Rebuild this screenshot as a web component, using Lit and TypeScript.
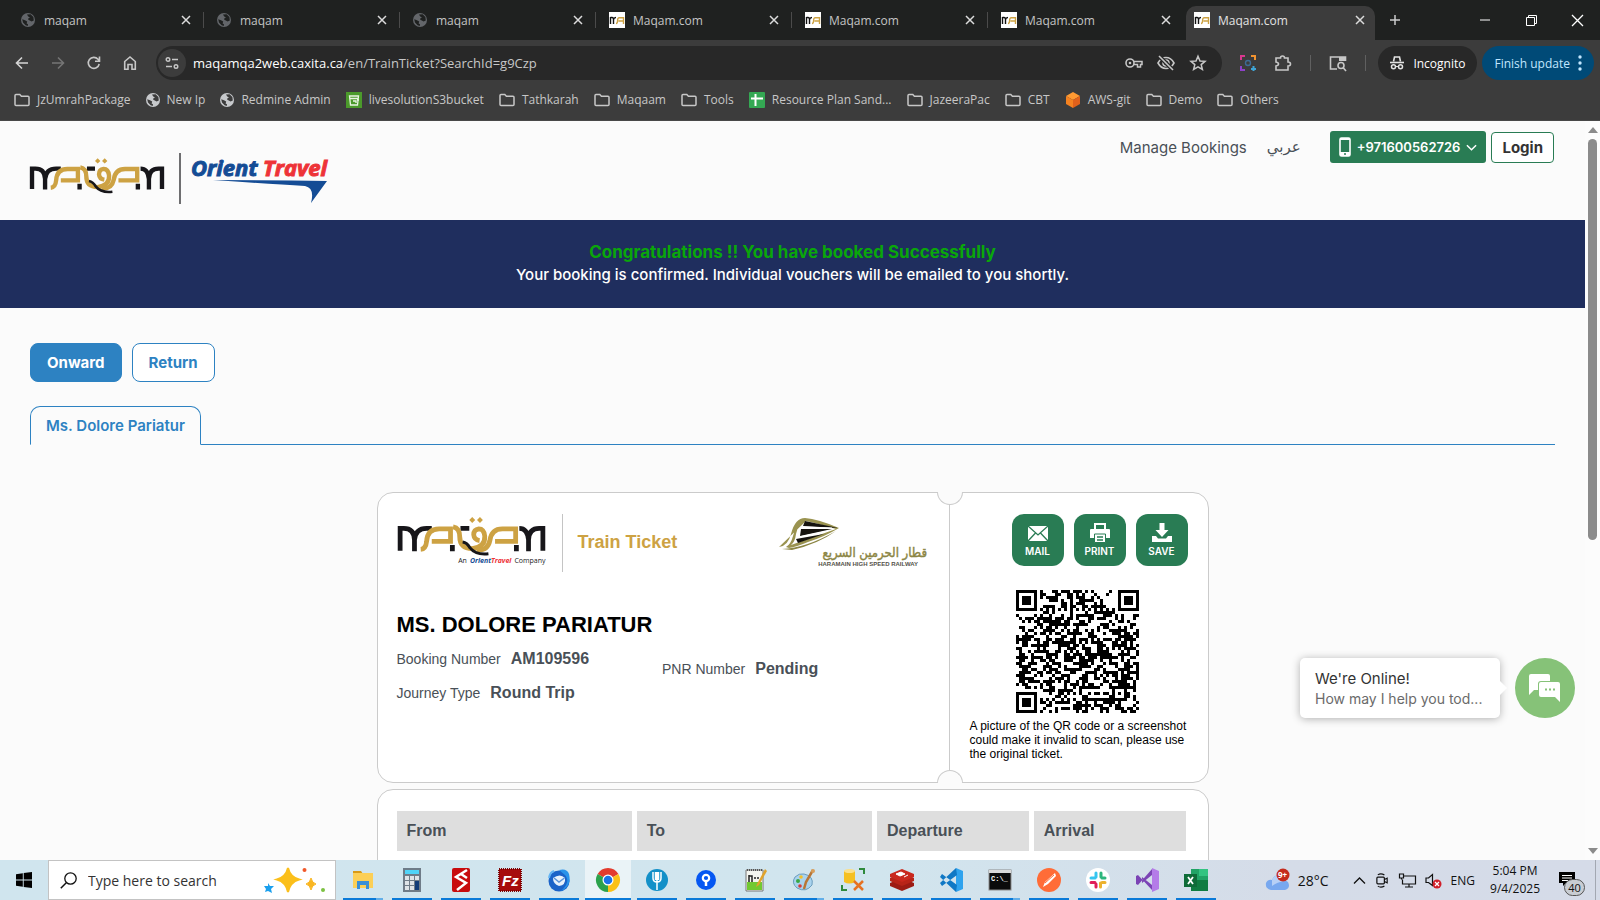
import { LitElement, html, svg, css } from "lit";
import { customElement } from "lit/decorators.js";

const icon = (size: number, box: string, body: unknown, h = size) =>
  html`<svg width=${size} height=${h} viewBox=${box} fill="none" aria-hidden="true">${body}</svg>`;

const globe = (color: string, land: string) => icon(14, "0 0 14 14", svg`
  <circle cx="7" cy="7" r="7" fill=${color}/>
  <path d="M1.2 6.2 4 7.2 6.2 8.6 5.6 10.4 7 11.2 6.8 13 4.6 12.2 2 9.6Z M6 1.4 9.6 1.2 12.4 4 12.8 7.4 10.6 8.6 8.8 7.4 7.2 6.8 7.4 5.2 9 4.4 7.2 3.6Z" fill=${land}/>`);

const maqamFavicon = () => icon(16, "0 0 16 16", svg`
  <rect width="16" height="16" fill="#fff"/>
  <path d="M1.5 5V12M1.5 5.500H3Q4.500 5.500 4.500 7.500V12M4.500 7.500Q5 5.500 7 5.500" stroke="#111" stroke-width="1.400"/>
  <path d="M7 11.5Q8.6 11.5 8.6 8.500T10.500 5.700H14.500V12M9.500 9H14.500" stroke="#cda243" stroke-width="1.400"/>`);

const folder = () => icon(16, "0 0 16 16", svg`
  <path d="M1 3.500Q1 2.500 2 2.500H5.800L7.400 4.200H14Q15 4.200 15 5.200V12.500Q15 13.500 14 13.500H2Q1 13.500 1 12.500Z" stroke="#c7c7c7" stroke-width="1.500"/>`);

const close = (s = 10, c = "#dcdcdc") => icon(s, "0 0 10 10", svg`<path d="M1 1 9 9M9 1 1 9" stroke=${c} stroke-width="1.500"/>`);

const maqamMark = (width: number) => icon(width, "0 0 400 106", svg`
  <g stroke="#17161a" stroke-width="13">
    <path d="M6 92V31H16Q44 31 45 62V93M45 62Q48 31 78 31H92"/>
    <path d="M394 92V31H384Q356 31 355 62V93M355 62Q352 31 330 31"/>
    <path d="M148 76V93M170 31H194M322 76V93"/>
  </g>
  <g stroke="#cda243" stroke-width="13">
    <path d="M62 88Q76 87 78 66Q80 32 112 32H143V66H92"/>
    <path d="M150 27Q168 30 168 54Q168 86 202 86Q238 82 236 52Q234 32 220 32Q206 34 206 48Q207 62 222 64"/>
    <path d="M214 90Q244 92 250 64Q254 32 284 32H320V66H264"/>
  </g>
  <path d="M176 68Q188 70 196 84Q212 104 246 100" stroke="#17161a" stroke-width="8"/>
  <path d="M202 0 210 8 202 16 194 8ZM223 0 231 8 223 16 215 8Z" fill="#cda243"/>`, Math.round(width * 0.265));

const orientLogo = () => html`<svg class="orient" width="138" height="52" viewBox="0 0 138 52" role="img" aria-label="Orient Travel">
  <text x="0" y="23" fill="#144c95" stroke="#144c95">Orient</text>
  <text x="72" y="23" fill="#ee3338" stroke="#ee3338">Travel</text>
  <path d="M22 27Q80 27 136 28L120 50Q124 35 114 33Q80 31 22 27Z" fill="#144c95"/></svg>`;

const railLogo = () => html`<svg class="rail" width="150" height="54" viewBox="0 0 150 54" role="img" aria-label="Haramain High Speed Railway">
  <path d="M1 33Q10 32 13 20Q17 4 27 4Q40 5 61 14Q46 23 30 28Q18 33 11 34L8 33Q13 30 15 22Q18 9 26 7Q20 10 18 20Q17 28 13 31L58 15Q38 9 28 7" fill="#9a9350"/>
  <path d="M27 7 60 14 25 12ZM23 15 54 15 22 22ZM18 25 46 20 20 29Z" fill="#15130f"/>
  <path d="M24 13 54 14M21 23 50 17" stroke="#fff" stroke-width="1"/>
  <path d="M4 35Q28 34 58 17Q40 30 14 36Z" fill="#8b8543"/>
  <text class="rail-ar" x="149" y="43" fill="#8b8543">قطار الحرمين السريع</text>
  <text class="rail-en" x="140" y="52" fill="#55524a">HARAMAIN HIGH SPEED RAILWAY</text></svg>`;

const N = 41;
function qrPath(): string {
  let seed = 7321;
  const rnd = () => ((seed = (seed * 1103515245 + 12345) % 2147483648) / 2147483648);
  let d = "";
  const finder = (x: number, y: number, ox: number, oy: number) => {
    const a = x - ox, b = y - oy;
    if (a < -1 || b < -1 || a > 7 || b > 7) return null;
    if (a < 0 || b < 0 || a > 6 || b > 6) return false;
    const r = Math.max(Math.abs(a - 3), Math.abs(b - 3));
    return r !== 2;
  };
  for (let y = 0; y < N; y++) {
    for (let x = 0; x < N; x++) {
      const random = rnd() < 0.51;
      let on = finder(x, y, 0, 0) ?? finder(x, y, N - 7, 0) ?? finder(x, y, 0, N - 7);
      if (on === null) {
        const r = Math.max(Math.abs(x - 34), Math.abs(y - 34));
        if (r <= 2) on = r !== 1;
        else if (x === 6 || y === 6) on = (x + y) % 2 === 0;
        else on = random;
      }
      if (on) d += `M${x} ${y}h1v1h-1z`;
    }
  }
  return d;
}

const taskIcons: { name: string; state?: string; art: unknown }[] = [
  { name: "File Explorer", state: "multi", art: svg`<path d="M2 3H10L12 6H2Z" fill="#d99a17"/><path d="M2 5H22V20H2Z" fill="#fccf56"/><path d="M6 21V13H18V21H15V17H9V21Z" fill="#3a8fd6"/>` },
  { name: "Calculator", art: svg`<rect x="3" width="18" height="24" fill="#6f7c88"/><rect x="5" y="2" width="14" height="4" fill="#50d4f8"/><path d="M5 8h4v4H5zM10 8h4v4h-4zM15 8h4v4h-4zM5 13h4v4H5zM10 13h4v4h-4zM5 18h4v4H5zM10 18h4v4h-4z" fill="#dfe4e8"/><rect x="15" y="13" width="4" height="9" fill="#123c78"/>` },
  { name: "Red script tool", art: svg`<rect x="3" width="18" height="24" rx="2" fill="#c80b0d"/><path d="M18 2 7 9 17 15 8 22M12 6 18 10" stroke="#fff" stroke-width="2.500"/>` },
  { name: "FileZilla", art: svg`<rect x="1" y="1" width="22" height="22" fill="#a70c0c" stroke="#7d0505" stroke-width="2" stroke-dasharray="1 1"/><text class="glyph-fz" x="4" y="18" fill="#fff">Fz</text>` },
  { name: "Thunderbird", art: svg`<circle cx="12" cy="13" r="10.500" fill="#1b63c8"/><path d="M12 2Q20 0 22 6Q25 18 14 23Q24 14 18 7Z" fill="#2993ea"/><path d="M6 10Q13 5 18 10Q19 17 12 18Q6 16 6 10Z" fill="#e8f1fb"/><path d="M7 10 12 14 17.500 10" stroke="#5b93d8" stroke-width="1.500"/><path d="M2 10Q3 4 7 3" stroke="#64b5f4" stroke-width="2"/>` },
  { name: "Chrome", state: "active", art: svg`<path d="M12 12 1.600 6A12 12 0 0 1 22.400 6Z" fill="#e33b2e"/><path d="M12 12 22.400 6A12 12 0 0 1 12 24Z" fill="#fbc116"/><path d="M12 12V24A12 12 0 0 1 1.600 6Z" fill="#2ba24c"/><circle cx="12" cy="12" r="5.500" fill="#fff"/><circle cx="12" cy="12" r="4.300" fill="#1a73e8"/>` },
  { name: "Fork", art: svg`<circle cx="12" cy="12" r="11" fill="#1390c8"/><path d="M8 4V10Q8 14 12 14Q16 14 16 10V4M12 4V22M10.500 4V12M13.500 4V12" stroke="#fff" stroke-width="1.500"/>` },
  { name: "Sourcetree", art: svg`<circle cx="12" cy="12" r="10" fill="#0557f2"/><circle cx="12" cy="10" r="3.200" stroke="#fff" stroke-width="2.200"/><path d="M12 14V18" stroke="#fff" stroke-width="2.500"/>` },
  { name: "Notepad++", art: svg`<path d="M3 2H20V23H3Z" fill="#f4f5ef" stroke="#777"/><path d="M4 14H19V22H4Z" fill="#72c932"/><path d="M4 2H19" stroke="#555" stroke-width="2" stroke-dasharray="1 1"/><path d="M6 7V14M6 8H9V14M11 10H13M14 10H16" stroke="#222" stroke-width="1.500"/><path d="M22 1 14 16 13 19 16 17 24 3Z" fill="#e0a32c"/>` },
  { name: "Paint", state: "multi", art: svg`<path d="M12 6Q22 8 20 17Q14 25 5 20Q-1 15 3 9Q7 5 12 6Z" fill="#a9d3ee" stroke="#6b9dbd"/><circle cx="6" cy="13" r="2" fill="#39a845"/><circle cx="9" cy="9" r="1.800" fill="#f3c029"/><circle cx="8" cy="18" r="1.800" fill="#d93a3a"/><path d="M21 2 14 14 12 21" stroke="#b87636" stroke-width="2.500"/><circle cx="21" cy="3" r="2" fill="#d79e5a"/>` },
  { name: "Database tools", art: svg`<path d="M3 3Q9 0 14 3V14Q8 17 3 14Z" fill="#f5c021"/><ellipse cx="8.500" cy="3" rx="5.500" ry="2" fill="#fbe08a"/><path d="M18 1H23V6M6 22H1V17" stroke="#2f8a3c" stroke-width="2"/><path d="M13 13 22 22M22 13 13 22" stroke="#e67222" stroke-width="2.500"/>` },
  { name: "Redis", art: svg`<path d="M0 15 12 10 24 15V18L12 23 0 18Z" fill="#9c1c14"/><path d="M0 10 12 5 24 10V13L12 18 0 13Z" fill="#b82418"/><path d="M0 6 12 1 24 6V9L12 14 0 9Z" fill="#c9281d"/><path d="M6 6 11 4 15 6 10 8ZM14 9 18 7" fill="#fff" stroke="#fff"/>` },
  { name: "Visual Studio Code", art: svg`<path d="M17 0 24 3V21L17 24Z" fill="#2fa3ee"/><path d="M17 0 1 15 3 18 18 7ZM17 24 1 9 3 6 18 17Z" fill="#0f78c5"/>` },
  { name: "Command Prompt", state: "multi", art: svg`<rect x="1" y="2" width="22" height="20" fill="#0b0b0b" stroke="#8b8b8b"/><rect x="1" y="2" width="22" height="3" fill="#d9d9d9"/><text class="glyph-cmd" x="3" y="13" fill="#fff">C:\\_</text>` },
  { name: "Postman", art: svg`<circle cx="12" cy="12" r="12" fill="#ff6c37"/><path d="M18 5 8 14 6 19 11 16 19 8Z" fill="#fff"/><path d="M8 15 17 7" stroke="#ff6c37"/>` },
  { name: "Slack", art: svg`<circle cx="12" cy="12" r="12" fill="#fff"/><g stroke-width="3" stroke-linecap="round"><path d="M10 5V9M5 10H9" stroke="#36c5f0"/><path d="M15 5V9M19 10H16" stroke="#2eb67d"/><path d="M14.500 15V19M16 14.500H19" stroke="#ecb22e"/><path d="M10 16V19M5 14.500H9" stroke="#e01e5a"/></g>` },
  { name: "Visual Studio", art: svg`<path d="M17 0 24 3V21L17 24Z" fill="#b47be8"/><path d="M17 1 3 17 1 16V8L3 7 17 22V17L7 9V15L17 7Z" fill="#7b43b5"/>` },
  { name: "Excel", art: svg`<rect x="7" y="1" width="17" height="22" fill="#21a366"/><path d="M15 1H24V8H15Z" fill="#33c481"/><path d="M7 12H24V23H7Z" fill="#107c41"/><rect y="6" width="13" height="13" fill="#0e6b38"/><path d="M4 9 9 16M9 9 4 16" stroke="#fff" stroke-width="1.800"/>` },
];

@customElement("app-root")
export class AppRoot extends LitElement {
  static styles = css`
    :host { display: flex; flex-direction: column; height: 100vh; overflow: hidden; font-family: "Open Sans", sans-serif; --green: #297c54; --blue: #2d82c2; --sheet: #fbfbfb; }
    *, *::before, *::after { box-sizing: border-box; }
    button { font: inherit; color: inherit; background: none; border: 0; padding: 0; display: inline-flex; align-items: center; justify-content: center; }
    a { color: inherit; text-decoration: none; }
    h1, h2, p { margin: 0; padding: 0; }
    svg { display: block; flex: none; overflow: visible; }

    .strip { display: flex; height: 40px; flex: none; background: #1f2120; color: #c4c4c4; font-size: 12px; padding-left: 8px; }
    .tab { flex: 0 1 196px; height: 40px; display: flex; align-items: center; padding: 0 13px; position: relative; }
    .tab span { flex: 1; padding-left: 8px; }
    .tab.plain span { padding-left: 9px; }
    .tab::after { content: ""; position: absolute; right: 0; top: 12px; width: 1px; height: 16px; background: #4b4b4b; }
    .tab.before::after { display: none; }
    .tab.current { flex-basis: 189px; margin-left: 2px; height: 34px; align-self: flex-end; background: #3c3c3c; border-radius: 10px 10px 0 0; padding: 0 10px 6px 8px; color: #e3e3e3; }
    .tab.current::after { display: none; }
    .plus { width: 40px; }
    .window { margin-left: auto; display: flex; }
    .window button { width: 46px; }

    .toolbar { flex: none; background: #3c3c3c; display: flex; align-items: center; height: 46px; padding: 0 6px 0 14px; }
    .nav { display: flex; gap: 20px; margin-right: 18px; }
    .nav button { width: 16px; }
    .omni { flex: 1; display: flex; align-items: center; height: 34px; border-radius: 17px; background: #282828; padding: 0 15px 0 2px; color: #c7c7c7; font-size: 13px; }
    .site { width: 28px; height: 28px; border-radius: 14px; background: #3c3c3c; margin-right: 7px; }
    .omni b { font-weight: 400; color: #fff; }
    .url { flex: 1; }
    .omni .tools { display: flex; gap: 14px; }
    .ext { display: flex; align-items: center; gap: 18px; margin: 0 12px 0 18px; }
    .ext i { width: 1px; height: 16px; background: #606060; }
    .chip { height: 34px; border-radius: 17px; background: #282828; color: #fff; font-size: 12px; padding: 0 12px; gap: 9px; margin-right: 5px; }
    .chip.update { background: #004a77; color: #c2e7ff; padding: 0 12px; gap: 8px; margin: 0; white-space: nowrap; }

    .marks { flex: none; height: 35px; background: #3c3c3c; border-bottom: 1px solid #484848; display: flex; align-items: center; gap: 15px; padding: 0 14px 7px; color: #c7c7c7; font-size: 12px; white-space: nowrap; }
    .marks a { display: flex; align-items: center; gap: 7px; }

    .view { flex: 1; min-height: 0; display: flex; background: var(--sheet); position: relative; }
    .page { flex: 1; min-width: 0; overflow: hidden; font-family: Inter, sans-serif; color: #495057; }
    .scroll { width: 15px; background: #fcfcfc; display: flex; flex-direction: column; align-items: center; padding: 6px 0; gap: 6px; }
    .thumb { width: 9px; height: 401px; border-radius: 5px; background: #8b8b8b; }
    .down { margin-top: auto; }

    header { display: flex; height: 99px; padding: 10px 31px 0 30px; }
    .brand { display: flex; align-items: flex-start; padding-top: 22px; }
    .brand .mark { padding-top: 5px; }
    .rule { width: 2px; height: 51px; background: #6e6e70; margin: 0 10px 0 15px; }
    .orient text { font: italic 700 22px "Open Sans", sans-serif; stroke-width: 1px; }
    .menu { margin-left: auto; display: flex; align-items: center; height: 32px; font-size: 15px; }
    .menu .ar { font-family: "DejaVu Sans", sans-serif; margin: 0 29px 0 20px; }
    .phone { height: 32px; border-radius: 3px; background: var(--green); color: #fff; font-size: 13px; font-weight: 600; padding: 0 9px; gap: 6px; margin-right: 5px; }
    .login { height: 31px; border: 1px solid var(--green); border-radius: 4px; background: #fff; color: #333; font-weight: 700; font-size: 15px; padding: 0 10px; }

    .banner { background: #1f2e5e; color: #fff; text-align: center; height: 88px; padding-top: 21px; font-size: 15px; line-height: 22px; font-weight: 500; }
    .banner h1 { font-size: 17px; line-height: 23px; font-weight: 700; color: #0aa70a; }

    .content { padding: 35px 30px 0; }
    .ways { display: flex; gap: 10px; }
    .ways button { height: 39px; border: 1px solid var(--blue); border-radius: 8px; background: #fff; color: var(--blue); font-weight: 700; font-size: 15px; padding: 0 16px 1px; }
    .ways .on { background: var(--blue); color: #fff; }
    .names { margin-top: 24px; border-bottom: 1px solid var(--blue); height: 39px; display: flex; }
    .names button { height: 39px; border: 1px solid var(--blue); border-bottom-color: var(--sheet); border-radius: 10px 10px 0 0; background: var(--sheet); color: var(--blue); font-weight: 600; font-size: 15px; padding: 0 15px 1px; }

    .card { max-width: 832px; margin: 0 auto; background: #fff; border: 1px solid #cbcbcb; border-radius: 16px; font-family: "Liberation Sans", sans-serif; }
    .ticket { margin-top: 47px; display: flex; height: 291px; position: relative; }
    .main { flex: 1; padding: 21px 21px 0 19px; }
    .stub { width: 259px; border-left: 1px solid #cbcbcb; padding: 21px 20px 0; position: relative; }
    .notch { position: absolute; width: 26px; height: 13px; left: -13px; background: var(--sheet); border: 1px solid #cbcbcb; }
    .notch.top { top: -1px; border-top: 0; border-radius: 0 0 13px 13px; }
    .notch.bottom { bottom: -1px; border-bottom: 0; border-radius: 13px 13px 0 0; }
    .head { display: flex; height: 58px; }
    .head .logo { padding-top: 3px; }
    .head .sub { display: flex; justify-content: flex-end; align-items: center; gap: 3px; font: 7px "Open Sans", sans-serif; color: #222; }
    .sub b { font-style: italic; color: #144c95; }
    .sub b + b { color: #ee3338; margin-left: -3px; }
    .title { border-left: 1px solid #c4c4c4; margin-left: 16px; padding-left: 15px; color: #cda243; font-weight: 700; font-size: 18px; line-height: 56px; }
    .rail { margin-left: auto; }
    .rail-ar { font: 400 13px "DejaVu Sans Condensed", "DejaVu Sans", sans-serif; direction: rtl; text-anchor: start; stroke: #8b8543; stroke-width: 0.4px; }
    .rail-en { font: 700 6px "Liberation Sans", sans-serif; text-anchor: end; }
    .who { color: #000; font-size: 22px; line-height: 26px; margin-top: 40px; }
    .facts { display: grid; grid-template-columns: 1fr 1fr; align-items: start; margin-top: 4px; }
    .fact { font-size: 14px; line-height: 34px; }
    .late { padding-top: 10px; }
    .fact b { font-size: 16px; margin-left: 10px; }
    .acts { display: flex; gap: 10px; justify-content: flex-end; }
    .acts button { width: 52px; height: 52px; border-radius: 12px; background: var(--green); color: #fff; flex-direction: column; gap: 2px; font: 600 10px/12px Inter, sans-serif; }
    .qr { margin: 24px 0 0 46px; }
    .note { color: #000; font-size: 12px; line-height: 14px; margin-top: 6px; white-space: nowrap; }

    .trip { margin-top: 6px; padding: 21px 17px 0 14px; height: 200px; }
    table { width: 100%; border-spacing: 5px 0; table-layout: fixed; }
    th { background: #dedede; text-align: left; font-size: 16px; height: 40px; padding: 0 10px; }
    .place { width: 30.4%; }

    .chat { position: absolute; right: 25px; bottom: 142px; display: flex; gap: 15px; font-family: Inter, sans-serif; }
    .bubble { width: 200px; height: 60px; border-radius: 5px; background: #fff; box-shadow: 0 1px 8px rgba(0, 0, 0, .3); padding: 11px 15px; font-size: 15px; line-height: 20px; color: #333; position: relative; }
    .bubble::after { content: ""; position: absolute; right: -5px; top: 25px; width: 10px; height: 10px; background: #fff; transform: rotate(45deg); }
    .bubble p { font-size: 14px; color: #6a6a6a; overflow: hidden; text-overflow: ellipsis; white-space: nowrap; }
    .talk { width: 60px; height: 60px; border-radius: 30px; background: #86c278; }

    .task { flex: none; height: 40px; display: flex; background: linear-gradient(90deg, #d0e5ee, #d1e5ee 55%, #d5dce8 80%, #d5dbe8); color: #111; font-size: 12px; }
    .start { width: 48px; }
    .search { width: 288px; height: 40px; background: #fff; border: 1px solid #c3c3c3; display: flex; align-items: center; gap: 11px; padding: 0 9px 0 11px; }
    .search input { flex: 1; min-width: 0; border: 0; outline: 0; font: 14px "Open Sans", sans-serif; padding: 0; background: none; }
    .search input::placeholder { color: #333; opacity: 1; }
    .apps { display: flex; gap: 9px; padding-left: 7px; }
    .apps button { width: 40px; height: 40px; border-bottom: 2px solid #0a7ad8; padding-top: 1px; }
    .apps .multi { border-image: linear-gradient(90deg, #0a7ad8 80%, #62aee8 80%) 1; }
    .apps .active { background: #eaf3f7; width: 46px; margin: 0 -3px; }
    .tray { margin-left: auto; display: flex; align-items: center; }
    .tray .temp { font-size: 14px; margin: 0 24px 0 7px; }
    .sys { display: flex; align-items: center; gap: 9px; }
    .clock { text-align: center; line-height: 18px; margin: 0 19px 0 15px; }
    .alert { position: relative; width: 37px; height: 40px; border-right: 1px solid #a3a8b2; margin-right: 4px; align-items: flex-start; justify-content: flex-start; padding-top: 12px; }
    .count { position: absolute; left: 5px; top: 19px; width: 21px; height: 17px; border: 1px solid #555; border-radius: 9px; background: #c9cdd3; font-size: 11px; line-height: 15px; text-align: center; }
    .glyph-fz { font: italic 700 15px "Liberation Sans", sans-serif; }
    .glyph-cmd { font: 700 7px "Liberation Mono", monospace; }
    .nine { font: 700 8px "Open Sans", sans-serif; }
  `;

  private tabs() {
    const titles = ["maqam", "maqam", "maqam", "Maqam.com", "Maqam.com", "Maqam.com", "Maqam.com"];
    return titles.map((t, i) => html`<div class="tab ${i < 3 ? "plain" : ""} ${i === 6 ? "current" : ""} ${i === 5 ? "before" : ""}">
      ${i < 3 ? globe("#63666a", "#1f2120") : maqamFavicon()}<span>${t}</span><button aria-label="Close tab">${close()}</button></div>`);
  }

  private bookmarks() {
    const s3 = icon(16, "0 0 16 16", svg`<rect width="16" height="16" fill="#4b9a2b"/><path d="M3.500 4H12.500L11.500 13H4.500ZM4 6.500H12M7 9H10V11M11 8H13" stroke="#e9f4e2" stroke-width="1.300"/>`);
    const sheet = icon(16, "0 0 16 16", svg`<rect width="16" height="16" rx="1" fill="#34a853"/><path d="M6.500 2V14M2 6.500H14" stroke="#fff" stroke-width="2"/>`);
    const cube = icon(16, "0 0 16 16", svg`<path d="M8 0 15 4 8 8 1 4Z" fill="#ff9a32"/><path d="M1 4 8 8V16L1 12Z" fill="#f58220"/><path d="M15 4 8 8V16L15 12Z" fill="#e1611b"/>`);
    const g = () => globe("#c7c9cc", "#3c3c3c");
    const items: [unknown, string][] = [[folder(), "JzUmrahPackage"], [g(), "New Ip"], [g(), "Redmine Admin"], [s3, "livesolutionS3bucket"], [folder(), "Tathkarah"], [folder(), "Maqaam"], [folder(), "Tools"], [sheet, "Resource Plan Sand..."], [folder(), "JazeeraPac"], [folder(), "CBT"], [cube, "AWS-git"], [folder(), "Demo"], [folder(), "Others"]];
    return items.map(([i, t]) => html`<a href="#">${i}${t}</a>`);
  }

  render() {
    const c = "#c7c7c7";
    return html`
      <div class="strip">
        ${this.tabs()}
        <button class="plus" aria-label="New tab">${icon(12, "0 0 12 12", svg`<path d="M6 1V11M1 6H11" stroke="#ccc" stroke-width="1.500"/>`)}</button>
        <div class="window">
          <button aria-label="Minimize">${icon(10, "0 0 10 10", svg`<path d="M0 5H10" stroke="#fff"/>`)}</button>
          <button aria-label="Restore">${icon(11, "0 0 11 11", svg`<path d="M.5 2.500H8.500V10.500H.5ZM2.500 2.500V.5H10.500V8.500H8.500" stroke="#fff"/>`)}</button>
          <button aria-label="Close">${icon(11, "0 0 10 10", svg`<path d="M0 0 10 10M10 0 0 10" stroke="#fff" stroke-width="1.200"/>`)}</button>
        </div>
      </div>
      <div class="toolbar">
        <div class="nav">
          <button aria-label="Back">${icon(16, "0 0 16 16", svg`<path d="M14 8H3M8 2.500 2.500 8 8 13.500" stroke="#d5d5d5" stroke-width="1.600"/>`)}</button>
          <button aria-label="Forward">${icon(16, "0 0 16 16", svg`<path d="M2 8H13M8 2.500 13.500 8 8 13.500" stroke="#757575" stroke-width="1.600"/>`)}</button>
          <button aria-label="Reload">${icon(16, "0 0 16 16", svg`<path d="M13.200 9A5.500 5.500 0 1 1 12 4.300L13.500 6M13.500 1.500V6.300H9" stroke=${c} stroke-width="1.600"/>`)}</button>
          <button aria-label="Home">${icon(16, "0 0 16 16", svg`<path d="M2.700 14.200V6.500L8 2 13.300 6.500V14.200H10V9.500H6V14.200Z" stroke=${c} stroke-width="1.600"/>`)}</button>
        </div>
        <div class="omni">
          <button class="site" aria-label="Site information">${icon(14, "0 0 14 14", svg`<path d="M7 3.500H13M1 10.500H7" stroke=${c} stroke-width="1.500"/><circle cx="3" cy="3.500" r="1.800" stroke=${c} stroke-width="1.400"/><circle cx="11" cy="10.500" r="1.800" stroke=${c} stroke-width="1.400"/>`)}</button>
          <div class="url"><b>maqamqa2web.caxita.ca</b>/en/TrainTicket?SearchId=g9Czp</div>
          <div class="tools">
            ${icon(18, "0 0 18 18", svg`<circle cx="5" cy="9" r="4" stroke=${c} stroke-width="1.600"/><circle cx="5" cy="9" r="1.300" fill=${c}/><path d="M9 7.500H17V10.500H15.500V13H12.500V10.500H9" stroke=${c} stroke-width="1.500"/>`)}
            ${icon(18, "0 0 18 18", svg`<path d="M1 9Q4 3.500 9 3.500T17 9Q14 14.500 9 14.500T1 9Z" stroke=${c} stroke-width="1.600"/><circle cx="9" cy="9" r="3" stroke=${c} stroke-width="1.600"/><path d="M2 2 16 16" stroke="#282828" stroke-width="4"/><path d="M2 2 16 16" stroke=${c} stroke-width="1.600"/>`)}
            ${icon(18, "0 0 18 18", svg`<path d="M9 2.200 11 7 16 7.300 12.200 10.600 13.400 15.500 9 12.800 4.600 15.500 5.800 10.600 2 7.300 7 7Z" stroke=${c} stroke-width="1.500"/>`)}
          </div>
        </div>
        <div class="ext">
          ${icon(16, "0 0 16 16", svg`<g stroke-width="2"><path d="M1 5V1H5" stroke="#d8388e"/><path d="M11 1H15V5" stroke="#f29330"/><path d="M1 11V15H5" stroke="#8e41c9"/><path d="M11 14H16M13.500 11V16" stroke="#3ea6d8"/></g><circle cx="8" cy="8" r="2.500" stroke="#3d6b94" stroke-width="1.400"/>`)}
          ${icon(18, "0 0 18 18", svg`<path d="M2 4H6.500Q6.500 2 8.500 2T10.500 4H14V8Q16.500 8 16.500 10T14 12V16H2V12Q4.500 11.500 4.500 10T2 8Z" stroke=${c} stroke-width="1.600"/>`)}
          <i></i>
          ${icon(18, "0 0 18 18", svg`<path d="M8 15H1.500V3H16.500V7" stroke=${c} stroke-width="1.600"/><path d="M10 3H17V7H10Z" fill=${c}/><circle cx="12" cy="11.500" r="3" stroke=${c} stroke-width="1.600"/><path d="M14 13.500 17 17" stroke=${c} stroke-width="1.600"/>`)}
          <i></i>
        </div>
        <button class="chip">${icon(14, "0 0 14 14", svg`<path d="M3.500 5.500 4.500 1H9.500L10.500 5.500" stroke="#e3e3e3" stroke-width="1.600"/><path d="M0 6.500H14" stroke="#e3e3e3" stroke-width="1.600"/><circle cx="3.500" cy="10.800" r="2" stroke="#e3e3e3" stroke-width="1.500"/><circle cx="10.500" cy="10.800" r="2" stroke="#e3e3e3" stroke-width="1.500"/><path d="M5.500 10.500H8.500" stroke="#e3e3e3"/>`)}Incognito</button>
        <button class="chip update">Finish update ${icon(4, "0 0 4 16", svg`<g fill="#c2e7ff"><circle cx="2" cy="2" r="1.700"/><circle cx="2" cy="8" r="1.700"/><circle cx="2" cy="14" r="1.700"/></g>`, 16)}</button>
      </div>
      <nav class="marks">${this.bookmarks()}</nav>

      <div class="view">
        <div class="page">
          <header>
            <div class="brand"><span class="mark">${maqamMark(134)}</span><span class="rule"></span>${orientLogo()}</div>
            <div class="menu">
              <a href="#">Manage Bookings</a><a class="ar" href="#">عربي</a>
              <button class="phone">${icon(12, "0 0 12 20", svg`<rect x="1" y="1" width="10" height="18" rx="1.500" stroke="#fff" stroke-width="1.600"/><path d="M1 15H11V19H1ZM1 1H11V3H1Z" fill="#fff"/><circle cx="6" cy="17" r="1" fill="#297c54"/>`, 20)}+971600562726 ${icon(11, "0 0 12 12", svg`<path d="M1 3.500 6 8.500 11 3.500" stroke="#fff" stroke-width="1.600"/>`)}</button>
              <button class="login">Login</button>
            </div>
          </header>
          <section class="banner"><h1>Congratulations !! You have booked Successfully</h1><p>Your booking is confirmed. Individual vouchers will be emailed to you shortly.</p></section>
          <div class="content">
            <div class="ways"><button class="on">Onward</button><button>Return</button></div>
            <div class="names"><button>Ms. Dolore Pariatur</button></div>
            <section class="card ticket">
              <div class="main">
                <div class="head">
                  <div class="logo">${maqamMark(149)}<div class="sub">An <b>Orient</b><b>Travel</b> Company</div></div>
                  <div class="title">Train Ticket</div>
                  ${railLogo()}
                </div>
                <h2 class="who">MS. DOLORE PARIATUR</h2>
                <div class="facts">
                  <div><div class="fact">Booking Number<b>AM109596</b></div><div class="fact">Journey Type<b>Round Trip</b></div></div>
                  <div class="fact late">PNR Number<b>Pending</b></div>
                </div>
              </div>
              <div class="stub">
                <span class="notch top"></span><span class="notch bottom"></span>
                <div class="acts">
                  <button>${icon(20, "0 0 20 20", svg`<rect y="3" width="20" height="15" fill="#fff"/><path d="M0 3 10 12 20 3M0 18 7.500 10M20 18 12.500 10" stroke="#297c54" stroke-width="1.300"/>`)}MAIL</button>
                  <button>${icon(20, "0 0 20 20", svg`<path d="M5 6V1H15V6" stroke="#fff" stroke-width="2"/><path d="M0 7Q0 6 1 6H19Q20 6 20 7V15H0Z" fill="#fff"/><path d="M4.500 11H15.500V19.500H4.500Z" fill="#fff" stroke="#297c54"/><path d="M7 14H13M7 17H13" stroke="#297c54" stroke-width="1.300"/>`)}PRINT</button>
                  <button>${icon(20, "0 0 20 20", svg`<path d="M7.500 0H12.500V7H16.500L10 14 3.500 7H7.500Z" fill="#fff"/><path d="M0 13H4L6 15.500H14L16 13H20V19H0Z" fill="#fff"/>`)}SAVE</button>
                </div>
                <svg class="qr" width="123" height="123" viewBox="0 0 41 41" shape-rendering="crispEdges" role="img" aria-label="Ticket QR code"><path d=${qrPath()} fill="#000"/></svg>
                <p class="note">A picture of the QR code or a screenshot<br>could make it invalid to scan, please use<br>the original ticket.</p>
              </div>
            </section>
            <section class="card trip">
              <table><thead><tr><th class="place">From</th><th class="place">To</th><th>Departure</th><th>Arrival</th></tr></thead></table>
            </section>
          </div>
        </div>
        <div class="scroll">
          ${icon(10, "0 0 10 6", svg`<path d="M0 6 5 0 10 6Z" fill="#8b8b8b"/>`, 6)}
          <div class="thumb"></div>
          <span class="down">${icon(10, "0 0 10 6", svg`<path d="M0 0 5 6 10 0Z" fill="#8b8b8b"/>`, 6)}</span>
        </div>
        <div class="chat">
          <div class="bubble">We're Online!<p>How may I help you tod...</p></div>
          <button class="talk" aria-label="Open chat">${icon(32, "0 0 32 28", svg`<path d="M2 0H19Q21 0 21 2V7H12Q9 7 9 10V16H5L0 21V2Q0 0 2 0Z" fill="#fff"/><path d="M12 8H29Q31 8 31 10V28L26 23H12Q10 23 10 21V10Q10 8 12 8Z" fill="#fff"/><path d="M16 15.500H18M20 15.500H22M24 15.500H26" stroke="#86c278" stroke-width="2"/>`, 28)}</button>
        </div>
      </div>

      <footer class="task">
        <button class="start" aria-label="Start">${icon(16, "0 0 16 16", svg`<path d="M0 2.200 6.800 1.200V7.500H0ZM7.700 1.100 16 0V7.500H7.700ZM0 8.400H6.800V14.800L0 13.800ZM7.700 8.400H16V16L7.700 14.900Z" fill="#000"/>`)}</button>
        <label class="search">
          ${icon(17, "0 0 17 17", svg`<circle cx="10.500" cy="6.500" r="5.700" stroke="#111" stroke-width="1.300"/><path d="M6.500 10.500.8 16.200" stroke="#111" stroke-width="1.500"/>`)}
          <input type="text" placeholder="Type here to search" aria-label="Type here to search">
          ${icon(62, "0 0 62 26", svg`<path d="M24 1Q26 10 35 12.500Q26 15 24 25Q22 15 13 12.500Q22 10 24 1Z" fill="#fbbf1b" stroke="#fbbf1b" stroke-width="2"/><path d="M47 11Q48 16 52 17Q48 18 47 23Q46 18 42 17Q46 16 47 11Z" fill="#f9b622" stroke="#f9b622"/><path d="M4 16 6 19 10 19 7 22 8 26 4 24 1 25 2 22 0 19 4 19Z" fill="#1a9fed"/><circle cx="40.500" cy="3" r="2" fill="#f1592a"/><circle cx="59" cy="23" r="2" fill="#7cc142"/>`, 26)}
        </label>
        <div class="apps">${taskIcons.map((t) => html`<button class=${t.state ?? ""} aria-label=${t.name}>${icon(24, "0 0 24 24", t.art)}</button>`)}</div>
        <div class="tray">
          ${icon(26, "0 0 26 24", svg`<path d="M6 22Q0 21 1 15Q3 11 7 12Q10 5 17 9Q20 13 23 14Q26 20 20 22Z" fill="#78a8ef"/><path d="M7 12Q10 5 17 9L20 13Q12 14 7 18Z" fill="#b7d0f6"/><circle cx="18" cy="7" r="6.500" fill="#c42b1c"/><text class="nine" x="13" y="10" fill="#fff">9+</text>`, 24)}
          <span class="temp">28°C</span>
          <div class="sys">
            ${icon(13, "0 0 13 13", svg`<path d="M1 9.500 6.500 4 12 9.500" stroke="#111" stroke-width="1.300"/>`)}
            ${icon(15, "0 0 16 16", svg`<rect x="2" y="4.500" width="8" height="7" rx="1" stroke="#111" stroke-width="1.300"/><path d="M10 7 13 5.500V10.500L10 9M3 2Q6 0 10 2M3 14Q6 16 10 14" stroke="#111" stroke-width="1.200"/>`)}
            ${icon(17, "0 0 17 16", svg`<path d="M5 3.500H16.500V11.500H3.500V7M10 11.500V14.500M6 14.500H14M.5 1.500H4.500V5.500H.5ZM2.500 5.500V7" stroke="#111" stroke-width="1.200"/>`)}
            ${icon(17, "0 0 17 16", svg`<path d="M1 5.500H3.500L7.500 2V13L3.500 10H1Z" stroke="#111" stroke-width="1.200"/><circle cx="12" cy="11.500" r="4.500" fill="#d11f2a"/><path d="M10 9.500 14 13.500M14 9.500 10 13.500" stroke="#fff" stroke-width="1.200"/>`)}
            <span>ENG</span>
          </div>
          <div class="clock">5:04 PM<br>9/4/2025</div>
          <button class="alert" aria-label="Notifications">${icon(16, "0 0 16 14", svg`<path d="M0 0H16V11H7L4 14V11H0Z" fill="#000"/><path d="M3 3.500H13M3 6H13M3 8.500H9" stroke="#fff"/>`, 14)}<span class="count">40</span></button>
        </div>
      </footer>`;
  }
}
